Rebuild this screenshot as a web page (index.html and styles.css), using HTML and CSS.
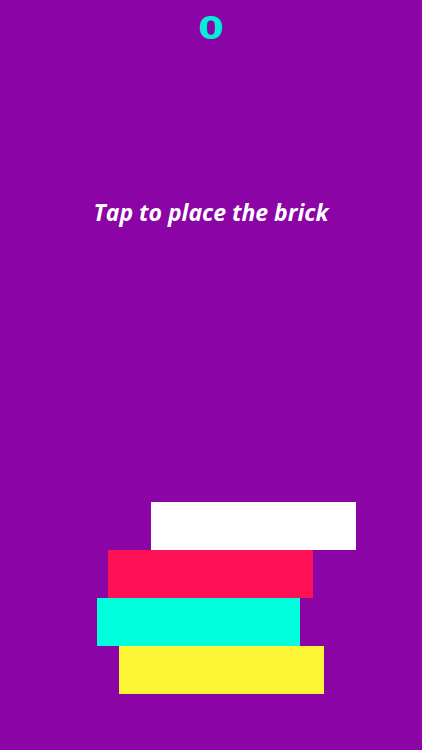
FILE: index.html
```html
<!DOCTYPE html>
<html lang="en">
<head>
    <meta charset="UTF-8">
    <meta name="viewport" content="width=device-width, initial-scale=1.0">
    <title>Brick Stack</title>
    <link rel="stylesheet" href="styles.css">
</head>
<body>
    <div class="game">
        <div class="score"><span>0</span></div>
        <p class="hint">Tap to place the brick</p>
        <div class="stack">
            <div class="brick brick-white" style="margin-left: 151px; width: 205px;"></div>
            <div class="brick brick-pink" style="margin-left: 108px; width: 205px;"></div>
            <div class="brick brick-cyan" style="margin-left: 97px; width: 203px;"></div>
            <div class="brick brick-yellow" style="margin-left: 119px; width: 205px;"></div>
        </div>
    </div>
</body>
</html>
```

FILE: styles.css
```css
body {
    margin: 0;
    padding: 0;
    background-color: #8b04a6;
    font-family: "Open Sans", Lato, sans-serif;
}
.game {
    height: 750px;
    display: flex;
    flex-direction: column;
    overflow: hidden;
}
.score {
    margin-top: 8px;
    text-align: center;
    color: #00efd8;
    font-family: "DejaVu Sans", sans-serif;
    font-size: 32px;
    font-weight: bold;
    line-height: 40px;
}
.score span {
    display: inline-block;
    transform: scaleX(1.15);
}
.hint {
    margin: 150px 0 0;
    text-align: center;
    color: #fff;
    font-size: 23px;
    font-weight: bold;
    font-style: italic;
    line-height: 28px;
}
.stack {
    margin-top: auto;
    padding-bottom: 56px;
    display: flex;
    flex-direction: column;
}
.brick {
    height: 48px;
}
.brick-white {
    background-color: #ffffff;
}
.brick-pink {
    background-color: #ff1156;
}
.brick-cyan {
    background-color: #00ffdd;
}
.brick-yellow {
    background-color: #fff537;
}
```
